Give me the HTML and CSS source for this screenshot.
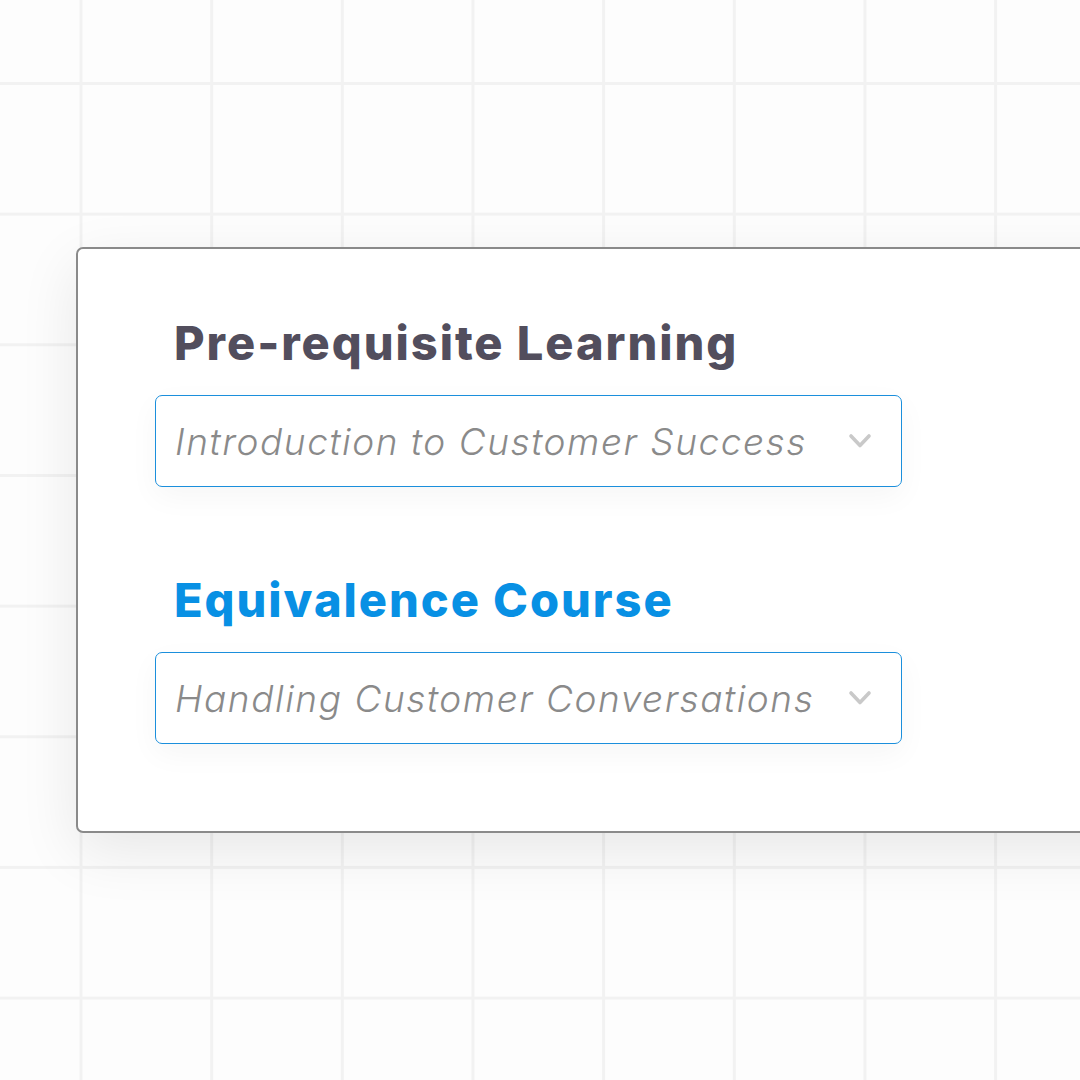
FILE: index.html
```html
<!DOCTYPE html>
<html>
<head>
<meta charset="utf-8">
<link rel="stylesheet" href="styles.css">
</head>
<body>
<div class="canvas">
  <div class="card">
    <div class="field">
      <h2 class="label label-dark">Pre-requisite Learning</h2>
      <div class="select">
        <span class="value">Introduction to Customer Success</span>
        <svg class="chev" width="24" height="16" viewBox="0 0 24 16"><path d="M3 3 L12 12.5 L21 3" fill="none" stroke="#c9c9c9" stroke-width="3.6" stroke-linecap="round" stroke-linejoin="round"/></svg>
      </div>
    </div>
    <div class="field">
      <h2 class="label label-blue">Equivalence Course</h2>
      <div class="select">
        <span class="value">Handling Customer Conversations</span>
        <svg class="chev" width="24" height="16" viewBox="0 0 24 16"><path d="M3 3 L12 12.5 L21 3" fill="none" stroke="#c9c9c9" stroke-width="3.6" stroke-linecap="round" stroke-linejoin="round"/></svg>
      </div>
    </div>
  </div>
</div>
</body>
</html>
```

FILE: styles.css
```css
html, body {
  margin: 0;
  padding: 0;
}
body {
  width: 1080px;
  height: 1080px;
  overflow: hidden;
  background-color: #fdfdfd;
  background-image:
    linear-gradient(to right, #f2f2f2 0, #f2f2f2 3px, transparent 3px),
    linear-gradient(to bottom, #f2f2f2 0, #f2f2f2 3px, transparent 3px);
  background-size: 130.67px 130.67px;
  background-position: 79.5px 82px;
  font-family: "Inter", "Open Sans", sans-serif;
}
.canvas {
  padding-top: 247px;
  padding-left: 76px;
}
.card {
  width: 1100px;
  height: 586px;
  box-sizing: border-box;
  background: #ffffff;
  border: 2px solid #8a8a8a;
  border-radius: 7px;
  box-shadow: 0 18px 60px rgba(0, 0, 0, 0.09);
  padding: 66px 0 0 77px;
  display: flex;
  flex-direction: column;
  gap: 85px;
}
.field {
  display: flex;
  flex-direction: column;
  gap: 24px;
}
.label {
  margin: 0 0 0 19px;
  font-size: 47px;
  line-height: 56px;
  font-weight: 800;
  letter-spacing: 1.95px;
  white-space: nowrap;
}
.label-dark { color: #524e5d; }
.label-blue { color: #0890e4; }
.select {
  width: 747px;
  height: 92px;
  box-sizing: border-box;
  border: 1.5px solid #1b8fdc;
  border-radius: 7px;
  background: #ffffff;
  box-shadow: 0 10px 30px rgba(0, 0, 0, 0.04);
  display: flex;
  align-items: center;
  justify-content: space-between;
  padding: 0 29px 0 19px;
}
.value {
  font-size: 37px;
  font-style: italic;
  font-weight: 300;
  color: #8a8a8a;
  letter-spacing: 1.55px;
  white-space: nowrap;
}
.chev {
  display: block;
}
```
